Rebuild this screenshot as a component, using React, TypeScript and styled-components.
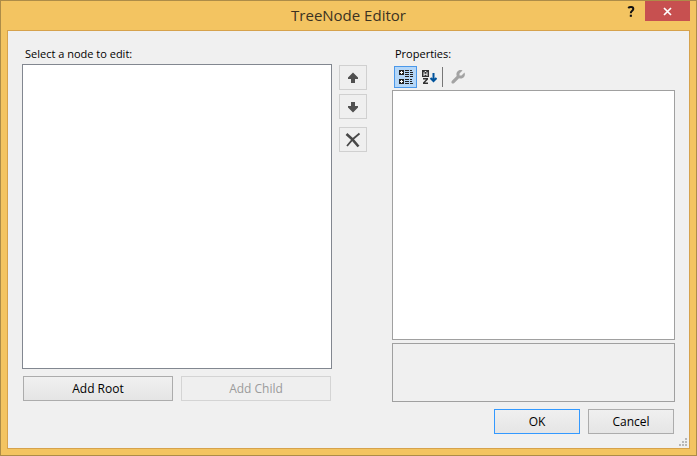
import React from "react";
import styled, { createGlobalStyle } from "styled-components";

const GlobalStyle = createGlobalStyle`
  * { box-sizing: border-box; }
  body { margin: 0; }
  button { font: inherit; color: inherit; padding: 0; margin: 0; }
  svg { display: block; }
`;

const Window = styled.div`
  display: flex;
  flex-direction: column;
  min-height: 100vh;
  padding: 0 6px 6px;
  border: 1px solid #ad8c48;
  background: #f3c461;
  font-family: "Open Sans", "Noto Sans", sans-serif;
  font-size: 12px;
  line-height: 17px;
  color: #000;
`;

const TitleBar = styled.header`
  display: grid;
  grid-template-columns: 1fr auto 1fr;
  height: 29px;
`;

const Title = styled.h1`
  grid-column: 2;
  margin: 0;
  font-size: 15px;
  font-weight: 400;
  line-height: 29px;
  color: #3b3222;
`;

const WindowControls = styled.div`
  display: flex;
  justify-content: flex-end;
  align-items: flex-start;
`;

const CaptionButton = styled.button<{ $close?: boolean }>`
  display: flex;
  align-items: center;
  justify-content: center;
  width: ${(p) => (p.$close ? 45 : 28)}px;
  height: 20px;
  border: 0;
  background: ${(p) => (p.$close ? "#c75050" : "transparent")};
`;

const Client = styled.main`
  flex: 1;
  display: flex;
  flex-direction: column;
  padding: 14px;
  position: relative;
  border: 1px solid #d6a24c;
  background: #f0f0f0;
`;

const Columns = styled.div`
  flex: 1;
  display: grid;
  grid-template-columns: minmax(0, 310fr) 60px minmax(0, 283fr);
`;

const NodePane = styled.section`
  display: flex;
  flex-direction: column;
  padding-bottom: 1px;
`;

const PropertyPane = styled.section`
  display: flex;
  flex-direction: column;
`;

const PaneLabel = styled.h2`
  margin: 0 3px 2px;
  font-size: 11px;
  font-weight: 400;
  line-height: 17px;
`;

const TreeBox = styled.div`
  flex: 1;
  border: 1px solid #828790;
  background: #fff;
`;

const AddButtons = styled.div`
  display: grid;
  grid-template-columns: 1fr 1fr;
  gap: 8px;
  margin: 7px 1px 0;
`;

const PushButton = styled.button<{ $primary?: boolean }>`
  height: 25px;
  border: 1px solid ${(p) => (p.$primary ? "#3399ff" : "#acacac")};
  background: linear-gradient(#f0f0f0, #e5e5e5);
  &:disabled {
    border-color: #d4d4d4;
    background: #efefef;
    color: #9b9b9b;
  }
`;

const MoveButtons = styled.div`
  display: flex;
  flex-direction: column;
  gap: 4px;
  padding: 20px 25px 0 7px;
`;

const IconButton = styled.button<{ $apart?: boolean }>`
  display: flex;
  align-items: center;
  justify-content: center;
  height: 25px;
  margin-top: ${(p) => (p.$apart ? 4 : 0)}px;
  border: 1px solid #d0d0d0;
  background: #efefef;
`;

const Toolbar = styled.div`
  display: flex;
  align-items: center;
  height: 22px;
  margin: 2px;
`;

const ToolButton = styled.button<{ $active?: boolean }>`
  display: flex;
  align-items: center;
  justify-content: center;
  width: 23px;
  height: 22px;
  border: 1px solid ${(p) => (p.$active ? "#4a98ea" : "transparent")};
  background: ${(p) => (p.$active ? "#b5d7f8" : "transparent")};
`;

const Separator = styled.div`
  width: 1px;
  height: 20px;
  margin: 0 3px 0 2px;
  background: #777;
`;

const PropertyGrid = styled.div`
  flex: 1;
  border: 1px solid #a0a0a0;
  background: #fff;
`;

const Description = styled.div`
  height: 59px;
  margin-top: 3px;
  border: 1px solid #a0a0a0;
`;

const Footer = styled.footer`
  display: grid;
  grid-template-columns: 86px 86px;
  justify-content: end;
  gap: 8px;
  margin: 7px 1px 0;
`;

const ResizeGrip = styled.svg`
  position: absolute;
  right: 1px;
  bottom: 1px;
`;

const ArrowIcon = ({ down }: { down?: boolean }) => (
  <svg width="12" height="12" viewBox="0 0 12 12" aria-hidden="true">
    <path
      d={down ? "M4 1H8V5H11V6.5L6 11.5L1 6.5V5H4Z" : "M4 11H8V7H11V5.5L6 .5L1 5.5V7H4Z"}
      fill="#505050"
    />
  </svg>
);

const DeleteIcon = () => (
  <svg width="16" height="16" viewBox="0 0 16 16" aria-hidden="true">
    <path d="M1.5 2L7 7L13.5 14.5" fill="none" stroke="#484848" strokeWidth="2.6" />
    <path d="M14.5 1.5L8 7L2 14" fill="none" stroke="#484848" strokeWidth="1.8" />
  </svg>
);

const CategoryIcon = () => (
  <svg width="16" height="16" viewBox="0 0 16 16" shapeRendering="crispEdges" aria-hidden="true">
    <g fill="#222">
      <path d="M1 1h5v5H1zM1 10h5v5H1z" />
      <path d="M7 1h4v1H7zM7 3h4v1H7zM7 5h4v1H7zM7 7h4v1H7zM7 10h4v1H7zM7 12h4v1H7zM7 14h4v1H7z" />
      <path d="M12 1h2v1h-2zM12 3h3v1h-3zM12 5h3v1h-3zM12 7h3v1h-3zM12 10h2v1h-2zM12 12h2v1h-2zM12 14h3v1h-3z" />
    </g>
    <path d="M3 2h1v1h1v1H4v1H3V4H2V3h1zM3 11h1v1h1v1H4v1H3v-1H2v-1h1z" fill="#fff" />
  </svg>
);

const SortIcon = () => (
  <svg width="16" height="16" viewBox="0 0 16 16" aria-hidden="true">
    <path d="M1 1h7v7H1z" fill="#333" />
    <path d="M3 7V3.5L4 2.5H5L6 3.5V7M3 5.3H6" fill="none" stroke="#f0f0f0" />
    <path d="M2 9H7V10.5L4 13.5H7V15H2V13.5L5 10.5H2Z" fill="#333" />
    <path d="M12.5 4V12M9.5 9L12.5 12L15.5 9" fill="none" stroke="#00539c" strokeWidth="2" />
  </svg>
);

const WrenchIcon = () => (
  <svg width="16" height="16" viewBox="0 0 16 16" aria-hidden="true">
    <path
      d="M12.5 1.5L9.5 4.5V6.5H11.5L14.5 3.5C16 7 13 10.5 9 9.3L4.3 14C2.5 15.7 .3 13.5 2 11.7L6.7 7C5.5 3 9 0 12.5 1.5Z"
      fill="#a3a3a3"
    />
  </svg>
);

const CloseIcon = () => (
  <svg width="9" height="9" viewBox="0 0 9 9" aria-hidden="true">
    <path d="M1 1L8 8M8 1L1 8" stroke="#fff" strokeWidth="1.7" />
  </svg>
);

const HelpIcon = () => (
  <svg width="8" height="11" viewBox="0 0 8 11" aria-hidden="true">
    <path d="M1.2 2C2.5 .8 6.3 .4 6.3 3C6.3 4.8 3.8 4.8 3.8 7.2" fill="none" stroke="#111" strokeWidth="2" />
    <rect x="2.8" y="8.7" width="2.1" height="2.1" fill="#111" />
  </svg>
);

export default function App() {
  return (
    <>
      <GlobalStyle />
      <Window>
        <TitleBar>
          <Title>TreeNode Editor</Title>
          <WindowControls>
            <CaptionButton aria-label="Help"><HelpIcon /></CaptionButton>
            <CaptionButton $close aria-label="Close"><CloseIcon /></CaptionButton>
          </WindowControls>
        </TitleBar>
        <Client>
          <Columns>
            <NodePane>
              <PaneLabel id="nodes-label">Select a node to edit:</PaneLabel>
              <TreeBox role="tree" aria-labelledby="nodes-label" tabIndex={0} />
              <AddButtons>
                <PushButton>Add Root</PushButton>
                <PushButton disabled>Add Child</PushButton>
              </AddButtons>
            </NodePane>
            <MoveButtons>
              <IconButton disabled aria-label="Move up"><ArrowIcon /></IconButton>
              <IconButton disabled aria-label="Move down"><ArrowIcon down /></IconButton>
              <IconButton disabled $apart aria-label="Delete"><DeleteIcon /></IconButton>
            </MoveButtons>
            <PropertyPane>
              <PaneLabel id="properties-label">Properties:</PaneLabel>
              <Toolbar role="toolbar" aria-label="Property view">
                <ToolButton $active aria-pressed="true" aria-label="Categorized"><CategoryIcon /></ToolButton>
                <ToolButton aria-label="Alphabetical"><SortIcon /></ToolButton>
                <Separator />
                <ToolButton disabled aria-label="Property pages"><WrenchIcon /></ToolButton>
              </Toolbar>
              <PropertyGrid role="region" aria-labelledby="properties-label" />
              <Description />
            </PropertyPane>
          </Columns>
          <Footer>
            <PushButton $primary>OK</PushButton>
            <PushButton>Cancel</PushButton>
          </Footer>
          <ResizeGrip width="10" height="10" viewBox="0 0 10 10" shapeRendering="crispEdges" aria-hidden="true">
            <path
              d="M7 1h2v2H7zM4 4h2v2H4zM7 4h2v2H7zM1 7h2v2H1zM4 7h2v2H4zM7 7h2v2H7z"
              fill="#b8b8b8"
            />
          </ResizeGrip>
        </Client>
      </Window>
    </>
  );
}
